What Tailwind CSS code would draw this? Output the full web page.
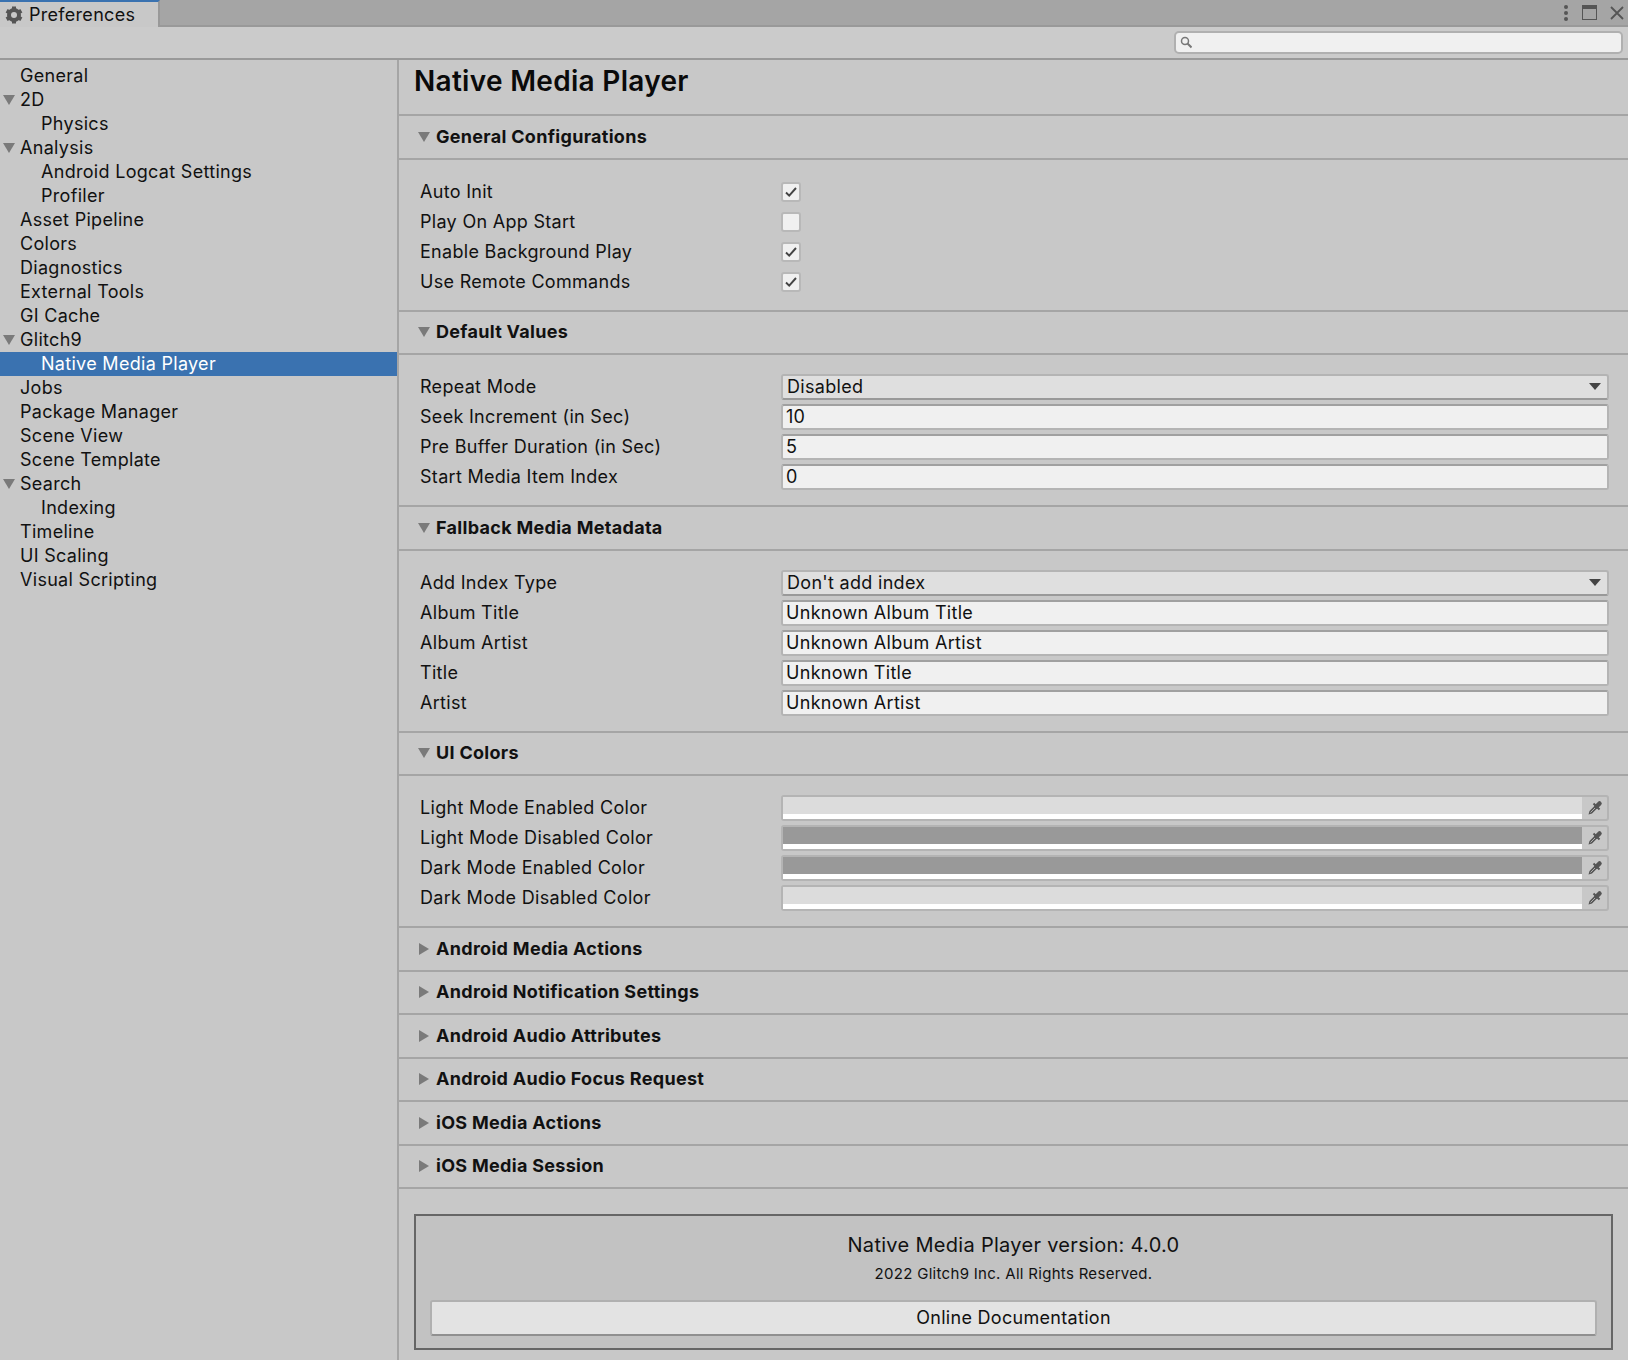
<!DOCTYPE html>
<html lang="en">
  <head>
    <meta charset="UTF-8" />
    <title>Preferences</title>
    <script src="https://cdn.jsdelivr.net/npm/@tailwindcss/browser@4"></script>
  </head>
  <body class="w-[1628px] h-[1360px] overflow-hidden bg-[#c8c8c8] font-['Inter',sans-serif] text-[18px] leading-[24px] tracking-[0.3px] text-[#111]">
    <svg class="hidden">
      <symbol id="down" viewBox="0 0 12 12"><path d="M0 1h12L6 11z" fill="#7a7a7a" /></symbol>
      <symbol id="right" viewBox="0 0 12 12"><path d="M1 0v12l10-6z" fill="#7a7a7a" /></symbol>
      <symbol id="check" viewBox="0 0 14 14"><path d="M2 7.5l3.2 3.2L12 3" fill="none" stroke="#444" stroke-width="1.9" /></symbol>
      <symbol id="arrow" viewBox="0 0 12 8"><path d="M0 0h12L6 7z" fill="#444" /></symbol>
      <symbol id="dropper" viewBox="0 0 16 16">
        <path d="M1.5 14.5l1-3.5 6-6 2.500 2.500-6 6z" fill="#555" />
        <path d="M3.500 12.500l5-5" stroke="#c8c8c8" stroke-width="0.8" />
        <path d="M6.500 3.500l6 6" stroke="#555" stroke-width="2" />
        <path d="M9.500 6.500l3-3" stroke="#555" stroke-width="4.500" stroke-linecap="round" />
      </symbol>
    </svg>

    <!-- tab bar -->
    <div class="h-[27px] bg-[#a5a5a5] border-b-2 border-[#999] flex justify-between">
      <div class="w-[160px] h-[27px] bg-[#c8c8c8] border-t-2 border-t-[#3a72b0] border-r-2 border-r-[#999] flex items-center pl-[5px] gap-[6px]">
        <svg class="w-[18px] h-[18px]" viewBox="0 0 18 18" fill="#555">
          <circle cx="9" cy="9" r="5" fill="none" stroke="#555" stroke-width="4" />
          <rect x="7" y="0.500" width="4" height="17" />
          <rect x="7" y="0.500" width="4" height="17" transform="rotate(60 9 9)" />
          <rect x="7" y="0.500" width="4" height="17" transform="rotate(120 9 9)" />
          <circle cx="9" cy="9" r="3" fill="#c8c8c8" />
        </svg>
        <span>Preferences</span>
      </div>
      <div class="flex items-center gap-[13px] pr-[4px] h-[25px]">
        <svg class="w-[6px] h-[16px]" viewBox="0 0 6 16" fill="#555">
          <circle cx="3" cy="2" r="2" /><circle cx="3" cy="8" r="2" /><circle cx="3" cy="14" r="2" />
        </svg>
        <svg class="w-[15px] h-[15px]" viewBox="0 0 15 15" fill="none">
          <rect x="0.500" y="0.500" width="14" height="14" stroke="#555" />
          <rect x="0" y="0" width="15" height="4" fill="#555" />
        </svg>
        <svg class="w-[14px] h-[14px]" viewBox="0 0 14 14" fill="none" stroke="#555" stroke-width="1.800">
          <path d="M1 1l12 12M13 1L1 13" />
        </svg>
      </div>
    </div>

    <!-- search toolbar -->
    <div class="h-[33px] bg-[#cbcbcb] border-b-2 border-[#999] flex items-center justify-end pr-[5px]">
      <div class="w-[449px] h-[23px] bg-[#f0f0f0] border-2 border-[#b0b0b0] rounded-[5px] flex items-center pl-[4px]">
        <svg class="w-[12px] h-[13px]" viewBox="0 0 12 13" fill="none" stroke="#777">
          <circle cx="5" cy="5" r="3.500" stroke-width="1.500" />
          <path d="M7.500 7.500l4 4" stroke-width="2" />
        </svg>
      </div>
    </div>

    <div class="flex h-[1300px]">
      <!-- sidebar -->
      <nav class="w-[399px] shrink-0 border-r-2 border-[#a5a5a5] pt-[4px]">
        <div class="h-[24px] pl-[20px]">General</div>
        <div class="h-[24px] pl-[3px] flex items-center gap-[5px]"><svg class="w-[12px] h-[12px]"><use href="#down" /></svg>2D</div>
        <div class="h-[24px] pl-[41px]">Physics</div>
        <div class="h-[24px] pl-[3px] flex items-center gap-[5px]"><svg class="w-[12px] h-[12px]"><use href="#down" /></svg>Analysis</div>
        <div class="h-[24px] pl-[41px]">Android Logcat Settings</div>
        <div class="h-[24px] pl-[41px]">Profiler</div>
        <div class="h-[24px] pl-[20px]">Asset Pipeline</div>
        <div class="h-[24px] pl-[20px]">Colors</div>
        <div class="h-[24px] pl-[20px]">Diagnostics</div>
        <div class="h-[24px] pl-[20px]">External Tools</div>
        <div class="h-[24px] pl-[20px]">GI Cache</div>
        <div class="h-[24px] pl-[3px] flex items-center gap-[5px]"><svg class="w-[12px] h-[12px]"><use href="#down" /></svg>Glitch9</div>
        <div class="h-[24px] pl-[41px] bg-[#3a72b0] text-white">Native Media Player</div>
        <div class="h-[24px] pl-[20px]">Jobs</div>
        <div class="h-[24px] pl-[20px]">Package Manager</div>
        <div class="h-[24px] pl-[20px]">Scene View</div>
        <div class="h-[24px] pl-[20px]">Scene Template</div>
        <div class="h-[24px] pl-[3px] flex items-center gap-[5px]"><svg class="w-[12px] h-[12px]"><use href="#down" /></svg>Search</div>
        <div class="h-[24px] pl-[41px]">Indexing</div>
        <div class="h-[24px] pl-[20px]">Timeline</div>
        <div class="h-[24px] pl-[20px]">UI Scaling</div>
        <div class="h-[24px] pl-[20px]">Visual Scripting</div>
      </nav>

      <!-- settings panel -->
      <main class="flex-1 min-w-0">
        <div class="h-[56px] pl-[15px] pt-[3px] border-b-2 border-[#a5a5a5]">
          <h1 class="text-[28px] leading-[36px] font-semibold text-[#0a0a0a]">Native Media Player</h1>
        </div>

        <section>
          <h2 class="h-[43.5px] pl-[19px] flex items-center gap-[6px] font-bold border-b-2 border-[#a5a5a5]"><svg class="w-[12px] h-[12px]"><use href="#down" /></svg>General Configurations</h2>
          <div class="pt-[17px] pb-[13px] px-[21px] border-b-2 border-[#a5a5a5]">
            <div class="h-[30px] flex items-center"><span class="w-[361px]">Auto Init</span><span class="w-[20px] h-[20px] bg-[#f0f0f0] border-2 border-[#b8b8b8] rounded-[3px] flex items-center justify-center"><svg class="w-[14px] h-[14px]"><use href="#check" /></svg></span></div>
            <div class="h-[30px] flex items-center"><span class="w-[361px]">Play On App Start</span><span class="w-[20px] h-[20px] bg-[#f0f0f0] border-2 border-[#b8b8b8] rounded-[3px]"></span></div>
            <div class="h-[30px] flex items-center"><span class="w-[361px]">Enable Background Play</span><span class="w-[20px] h-[20px] bg-[#f0f0f0] border-2 border-[#b8b8b8] rounded-[3px] flex items-center justify-center"><svg class="w-[14px] h-[14px]"><use href="#check" /></svg></span></div>
            <div class="h-[30px] flex items-center"><span class="w-[361px]">Use Remote Commands</span><span class="w-[20px] h-[20px] bg-[#f0f0f0] border-2 border-[#b8b8b8] rounded-[3px] flex items-center justify-center"><svg class="w-[14px] h-[14px]"><use href="#check" /></svg></span></div>
          </div>
        </section>

        <section>
          <h2 class="h-[43.5px] pl-[19px] flex items-center gap-[6px] font-bold border-b-2 border-[#a5a5a5]"><svg class="w-[12px] h-[12px]"><use href="#down" /></svg>Default Values</h2>
          <div class="pt-[17px] pb-[13px] pl-[21px] pr-[19px] border-b-2 border-[#a5a5a5]">
            <div class="h-[30px] flex items-center"><span class="w-[361px] shrink-0">Repeat Mode</span><div class="flex-1 h-[26px] bg-[#dfdfdf] border-x-2 border-t-2 border-b-2 border-[#b4b4b4] border-b-[#999] rounded-[3px] flex items-center justify-between pl-[4px] pr-[6px]">Disabled<svg class="w-[12px] h-[8px]"><use href="#arrow" /></svg></div></div>
            <div class="h-[30px] flex items-center"><span class="w-[361px] shrink-0">Seek Increment (in Sec)</span><div class="flex-1 h-[26px] bg-[#f0f0f0] border-2 border-[#b4b4b4] border-t-[#a0a0a0] rounded-[3px] pl-[3px] leading-[22px]">10</div></div>
            <div class="h-[30px] flex items-center"><span class="w-[361px] shrink-0">Pre Buffer Duration (in Sec)</span><div class="flex-1 h-[26px] bg-[#f0f0f0] border-2 border-[#b4b4b4] border-t-[#a0a0a0] rounded-[3px] pl-[3px] leading-[22px]">5</div></div>
            <div class="h-[30px] flex items-center"><span class="w-[361px] shrink-0">Start Media Item Index</span><div class="flex-1 h-[26px] bg-[#f0f0f0] border-2 border-[#b4b4b4] border-t-[#a0a0a0] rounded-[3px] pl-[3px] leading-[22px]">0</div></div>
          </div>
        </section>

        <section>
          <h2 class="h-[43.5px] pl-[19px] flex items-center gap-[6px] font-bold border-b-2 border-[#a5a5a5]"><svg class="w-[12px] h-[12px]"><use href="#down" /></svg>Fallback Media Metadata</h2>
          <div class="pt-[17px] pb-[13px] pl-[21px] pr-[19px] border-b-2 border-[#a5a5a5]">
            <div class="h-[30px] flex items-center"><span class="w-[361px] shrink-0">Add Index Type</span><div class="flex-1 h-[26px] bg-[#dfdfdf] border-2 border-[#b4b4b4] border-b-[#999] rounded-[3px] flex items-center justify-between pl-[4px] pr-[6px]">Don't add index<svg class="w-[12px] h-[8px]"><use href="#arrow" /></svg></div></div>
            <div class="h-[30px] flex items-center"><span class="w-[361px] shrink-0">Album Title</span><div class="flex-1 h-[26px] bg-[#f0f0f0] border-2 border-[#b4b4b4] border-t-[#a0a0a0] rounded-[3px] pl-[3px] leading-[22px]">Unknown Album Title</div></div>
            <div class="h-[30px] flex items-center"><span class="w-[361px] shrink-0">Album Artist</span><div class="flex-1 h-[26px] bg-[#f0f0f0] border-2 border-[#b4b4b4] border-t-[#a0a0a0] rounded-[3px] pl-[3px] leading-[22px]">Unknown Album Artist</div></div>
            <div class="h-[30px] flex items-center"><span class="w-[361px] shrink-0">Title</span><div class="flex-1 h-[26px] bg-[#f0f0f0] border-2 border-[#b4b4b4] border-t-[#a0a0a0] rounded-[3px] pl-[3px] leading-[22px]">Unknown Title</div></div>
            <div class="h-[30px] flex items-center"><span class="w-[361px] shrink-0">Artist</span><div class="flex-1 h-[26px] bg-[#f0f0f0] border-2 border-[#b4b4b4] border-t-[#a0a0a0] rounded-[3px] pl-[3px] leading-[22px]">Unknown Artist</div></div>
          </div>
        </section>

        <section>
          <h2 class="h-[43.5px] pl-[19px] flex items-center gap-[6px] font-bold border-b-2 border-[#a5a5a5]"><svg class="w-[12px] h-[12px]"><use href="#down" /></svg>UI Colors</h2>
          <div class="pt-[17px] pb-[13px] pl-[21px] pr-[19px] border-b-2 border-[#a5a5a5]">
            <div class="h-[30px] flex items-center"><span class="w-[361px] shrink-0">Light Mode Enabled Color</span>
              <div class="flex-1 h-[26px] bg-[#c8c8c8] border-2 border-[#b4b4b4] rounded-[3px] flex"><div class="flex-1 flex flex-col"><div class="flex-1 bg-[#dcdcdc]"></div><div class="h-[5px] bg-white"></div></div><div class="w-[25px] flex items-center justify-center"><svg class="w-[16px] h-[16px]"><use href="#dropper" /></svg></div></div></div>
            <div class="h-[30px] flex items-center"><span class="w-[361px] shrink-0">Light Mode Disabled Color</span>
              <div class="flex-1 h-[26px] bg-[#c8c8c8] border-2 border-[#b4b4b4] rounded-[3px] flex"><div class="flex-1 flex flex-col"><div class="flex-1 bg-[#999]"></div><div class="h-[5px] bg-white"></div></div><div class="w-[25px] flex items-center justify-center"><svg class="w-[16px] h-[16px]"><use href="#dropper" /></svg></div></div></div>
            <div class="h-[30px] flex items-center"><span class="w-[361px] shrink-0">Dark Mode Enabled Color</span>
              <div class="flex-1 h-[26px] bg-[#c8c8c8] border-2 border-[#b4b4b4] rounded-[3px] flex"><div class="flex-1 flex flex-col"><div class="flex-1 bg-[#999]"></div><div class="h-[5px] bg-white"></div></div><div class="w-[25px] flex items-center justify-center"><svg class="w-[16px] h-[16px]"><use href="#dropper" /></svg></div></div></div>
            <div class="h-[30px] flex items-center"><span class="w-[361px] shrink-0">Dark Mode Disabled Color</span>
              <div class="flex-1 h-[26px] bg-[#c8c8c8] border-2 border-[#b4b4b4] rounded-[3px] flex"><div class="flex-1 flex flex-col"><div class="flex-1 bg-[#dcdcdc]"></div><div class="h-[5px] bg-white"></div></div><div class="w-[25px] flex items-center justify-center"><svg class="w-[16px] h-[16px]"><use href="#dropper" /></svg></div></div></div>
          </div>
        </section>

        <h2 class="h-[43.5px] pl-[19px] flex items-center gap-[6px] font-bold border-b-2 border-[#a5a5a5]"><svg class="w-[12px] h-[12px]"><use href="#right" /></svg>Android Media Actions</h2>
        <h2 class="h-[43.5px] pl-[19px] flex items-center gap-[6px] font-bold border-b-2 border-[#a5a5a5]"><svg class="w-[12px] h-[12px]"><use href="#right" /></svg>Android Notification Settings</h2>
        <h2 class="h-[43.5px] pl-[19px] flex items-center gap-[6px] font-bold border-b-2 border-[#a5a5a5]"><svg class="w-[12px] h-[12px]"><use href="#right" /></svg>Android Audio Attributes</h2>
        <h2 class="h-[43.5px] pl-[19px] flex items-center gap-[6px] font-bold border-b-2 border-[#a5a5a5]"><svg class="w-[12px] h-[12px]"><use href="#right" /></svg>Android Audio Focus Request</h2>
        <h2 class="h-[43.5px] pl-[19px] flex items-center gap-[6px] font-bold border-b-2 border-[#a5a5a5]"><svg class="w-[12px] h-[12px]"><use href="#right" /></svg>iOS Media Actions</h2>
        <h2 class="h-[43.5px] pl-[19px] flex items-center gap-[6px] font-bold border-b-2 border-[#a5a5a5]"><svg class="w-[12px] h-[12px]"><use href="#right" /></svg>iOS Media Session</h2>

        <div class="mt-[25px] mx-[15px] h-[136px] bg-[#c2c2c2] border-2 border-[#666] flex flex-col items-center pt-[16px] px-[14px]">
          <p class="text-[20px] leading-[26px] text-[#111]">Native Media Player version: 4.0.0</p>
          <p class="text-[15px] leading-[20px] mt-[6px] text-[#111]">2022 Glitch9 Inc. All Rights Reserved.</p>
          <button class="mt-[16px] w-full h-[36px] bg-[#e3e3e3] border-2 border-[#b0b0b0] border-b-[#909090] rounded-[3px]">Online Documentation</button>
        </div>
      </main>
    </div>
  </body>
</html>
